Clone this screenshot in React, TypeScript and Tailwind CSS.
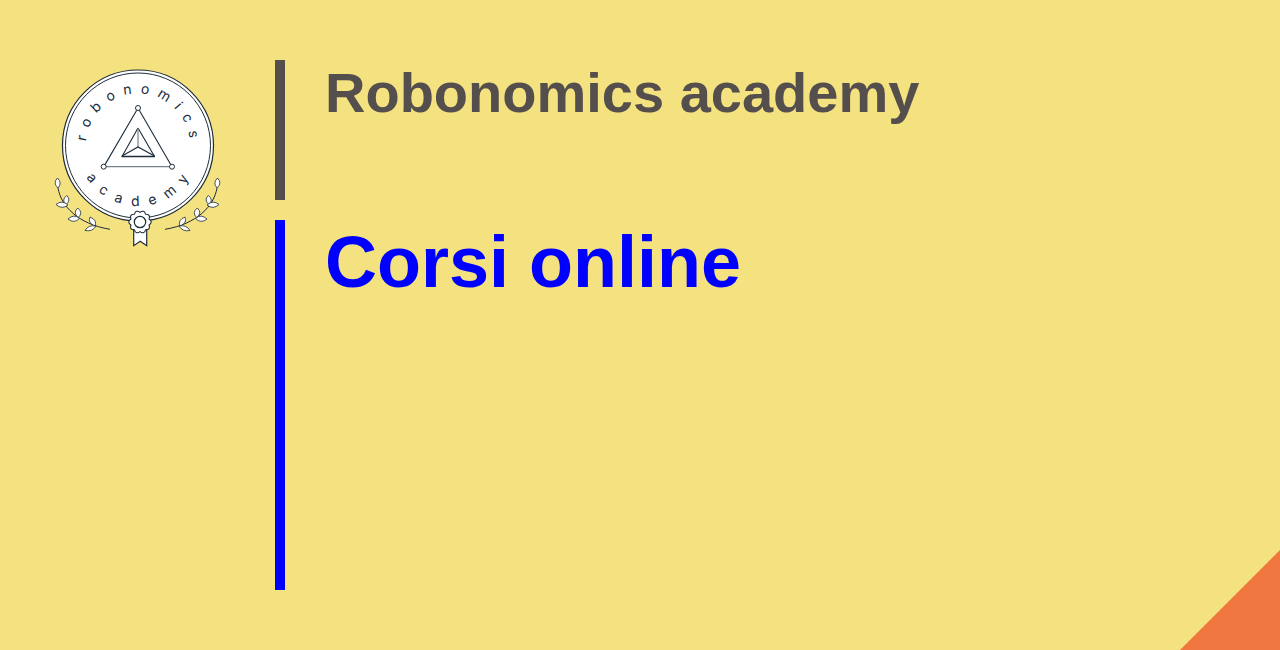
const INK = "#1d2c3b";

const sprigLeaves = [
  "M57.5 178Q52.5 183 58 188Q62.5 183 57.5 178z",
  "M66.7 195.5Q61 200 66 204.5Q71.5 200 66.7 195.5z",
  "M56 204.5Q62 199.5 68 205Q62 210 56 204.5z",
  "M77.7 208Q72.5 212.7 78.3 217.5Q83.5 212.7 77.7 208z",
  "M68 219Q74 213.5 79.5 218.5Q74 224 68 219z",
  "M90 217Q87.5 223 95 226Q97.5 220 90 217z",
  "M85 230.5Q88.5 224.5 96 226Q92.5 232 85 230.5z",
];

// scalloped edge of the rosette
const rosette = Array.from({ length: 10 }, (_, i) => {
  const a = (i / 10) * Math.PI * 2 - Math.PI / 2;
  const b = ((i + 1) / 10) * Math.PI * 2 - Math.PI / 2;
  const m = (a + b) / 2;
  const p = (r: number, t: number) => `${(140 + r * Math.cos(t)).toFixed(1)} ${(222 + r * Math.sin(t)).toFixed(1)}`;
  return `${i === 0 ? `M${p(9.6, a)}` : ""}Q${p(13.4, m)} ${p(9.6, b)}`;
}).join("") + "z";

function Sprig() {
  return (
    <g>
      <path d="M58 188C61 206 78 224 110 229.3" fill="none" stroke={INK} strokeWidth="1" />
      {sprigLeaves.map((d) => (
        <path key={d} d={d} fill="#fff" stroke={INK} strokeWidth="0.8" />
      ))}
    </g>
  );
}

function Logo() {
  return (
    <svg width="200" height="200" viewBox="40 60 200 200" className="block">
      <defs>
        <path id="arc-top" d="M86 145.5a52 52 0 0 1 104 0" />
        <path id="arc-bottom" d="M77.5 145.5a60.5 60.5 0 0 0 121 0" />
      </defs>
      <circle cx="138" cy="145.5" r="75.5" fill="#fff" stroke={INK} strokeWidth="1.2" />
      <circle cx="138" cy="145.5" r="72.5" fill="none" stroke={INK} strokeWidth="1" />
      <text fontFamily="Inter, sans-serif" fontSize="14" letterSpacing="8.2" fill={INK}>
        <textPath href="#arc-top" startOffset="51.5%" textAnchor="middle">robonomics</textPath>
      </text>
      <text fontFamily="Inter, sans-serif" fontSize="14" letterSpacing="10.2" fill={INK}>
        <textPath href="#arc-bottom" startOffset="52.5%" textAnchor="middle">academy</textPath>
      </text>
      <path d="M136.7 110.2 105 164.6M139.3 110.2 170.7 164.6" stroke={INK} strokeWidth="1.1" fill="none" />
      <path d="M106 166.7h63.5" stroke="#76818c" strokeWidth="1.2" fill="none" />
      <circle cx="138" cy="108" r="2.5" fill="#fff" stroke={INK} strokeWidth="1" />
      <circle cx="103.7" cy="166.7" r="2.5" fill="#fff" stroke={INK} strokeWidth="1" />
      <circle cx="172" cy="166.7" r="2.5" fill="#fff" stroke={INK} strokeWidth="1" />
      <path d="M138 128 122 156.5M138 128 154.5 156.5" stroke={INK} strokeWidth="1.1" fill="none" />
      <path d="M121.5 156.5h33.5" stroke={INK} strokeWidth="1.7" fill="none" />
      <path d="M138 128v19" stroke="#76818c" strokeWidth="1.2" fill="none" />
      <path d="M122 156 138 147 154.5 156" stroke={INK} strokeWidth="1.1" fill="none" />
      <Sprig />
      <g transform="translate(275 0) scale(-1 1)">
        <Sprig />
      </g>
      <path d="M133.7 229v16.7l6.5-4.5 6.5 4.5v-16.7z" fill="#fff" stroke={INK} strokeWidth="1.2" />
      <path d={rosette} fill="#fff" stroke={INK} strokeWidth="1.1" />
      <circle cx="140" cy="222" r="5.7" fill="#fff" stroke={INK} strokeWidth="1.2" />
    </svg>
  );
}

export default function App() {
  return (
    <div className="relative flex h-[650px] w-full overflow-hidden bg-[#f4e180] font-['Liberation_Sans',Arial,sans-serif]">
      <div className="w-[275px] shrink-0 pt-[60px] pl-[40px]">
        <Logo />
      </div>
      <div className="flex flex-1 flex-col gap-5 pt-[60px]">
        <div className="h-[139.5px] border-l-10 border-[#544e4c] pl-10">
          <h1 className="text-[56px] leading-[66px] font-bold text-[#544e4c]">Robonomics academy</h1>
        </div>
        <div className="h-[370.5px] border-l-10 border-[#0000ff] pl-10">
          <h2 className="text-[72px] leading-[84px] font-bold text-[#0000ff]">Corsi online</h2>
        </div>
      </div>
      <div className="absolute right-0 bottom-0 h-0 w-0 border-b-[100px] border-l-[100px] border-b-[#f0773f] border-l-transparent" />
    </div>
  );
}
